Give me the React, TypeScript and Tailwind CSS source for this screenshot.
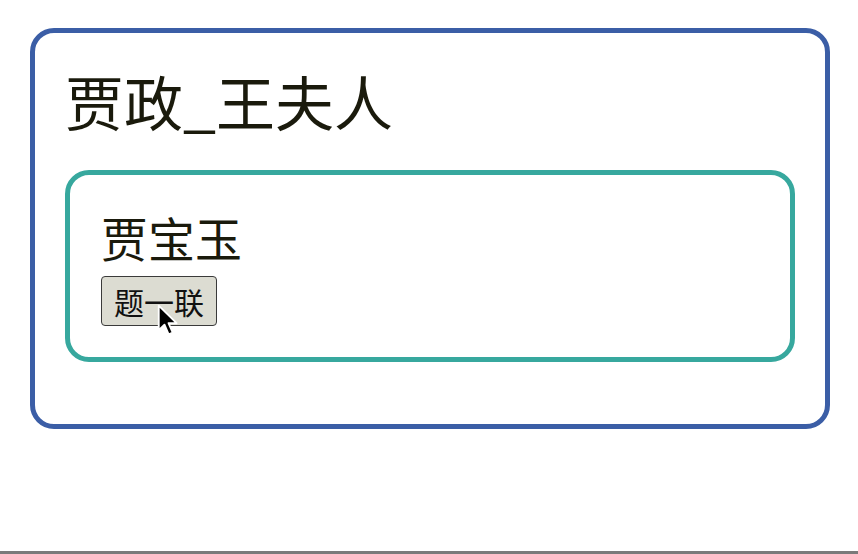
import React from 'react'

const font = { fontFamily: '"Noto Sans CJK SC", "Noto Sans", sans-serif' }

const Cursor = () => (
  <svg
    className="pointer-events-none absolute left-[56px] top-[28px]"
    width="22"
    height="32"
    viewBox="0 0 13 19"
  >
    <path
      d="M1 1 L1 15.5 L4.4 12.3 L6.9 18 L9.3 17 L6.8 11.4 L11.6 11.4 Z"
      fill="#000"
      stroke="#fff"
      strokeWidth="1.1"
      strokeLinejoin="round"
    />
  </svg>
)

export default function App() {
  return (
    <div className="flex h-[554px] w-full flex-col bg-white" style={font}>
      <div className="flex-1 pl-[30px] pt-[28px]">
        <div className="w-[800px] rounded-[24px] border-[5px] border-[#3b5ea6] px-[30px] pb-[62px] pt-[32px]">
          <h1 className="text-[59px] leading-[72px] font-normal text-[#1a1a0c]">
            贾政_王夫人
          </h1>
          <div className="mt-[33px] rounded-[24px] border-[5px] border-[#37a89e] px-[31px] pb-[31px] pt-[34px]">
            <h2 className="text-[47px] leading-[56px] font-normal text-[#1a1a0c]">
              贾宝玉
            </h2>
            <div className="relative mt-[11px] w-fit">
              <button className="h-[50px] rounded-[4px] border border-[#3a3a3a] bg-[#dcdcd2] px-[12px] text-[30px] leading-[40px] text-[#111]">
                题一联
              </button>
              <Cursor />
            </div>
          </div>
        </div>
      </div>
      <div className="h-[3px] bg-[#7a7a7a]" />
    </div>
  )
}
